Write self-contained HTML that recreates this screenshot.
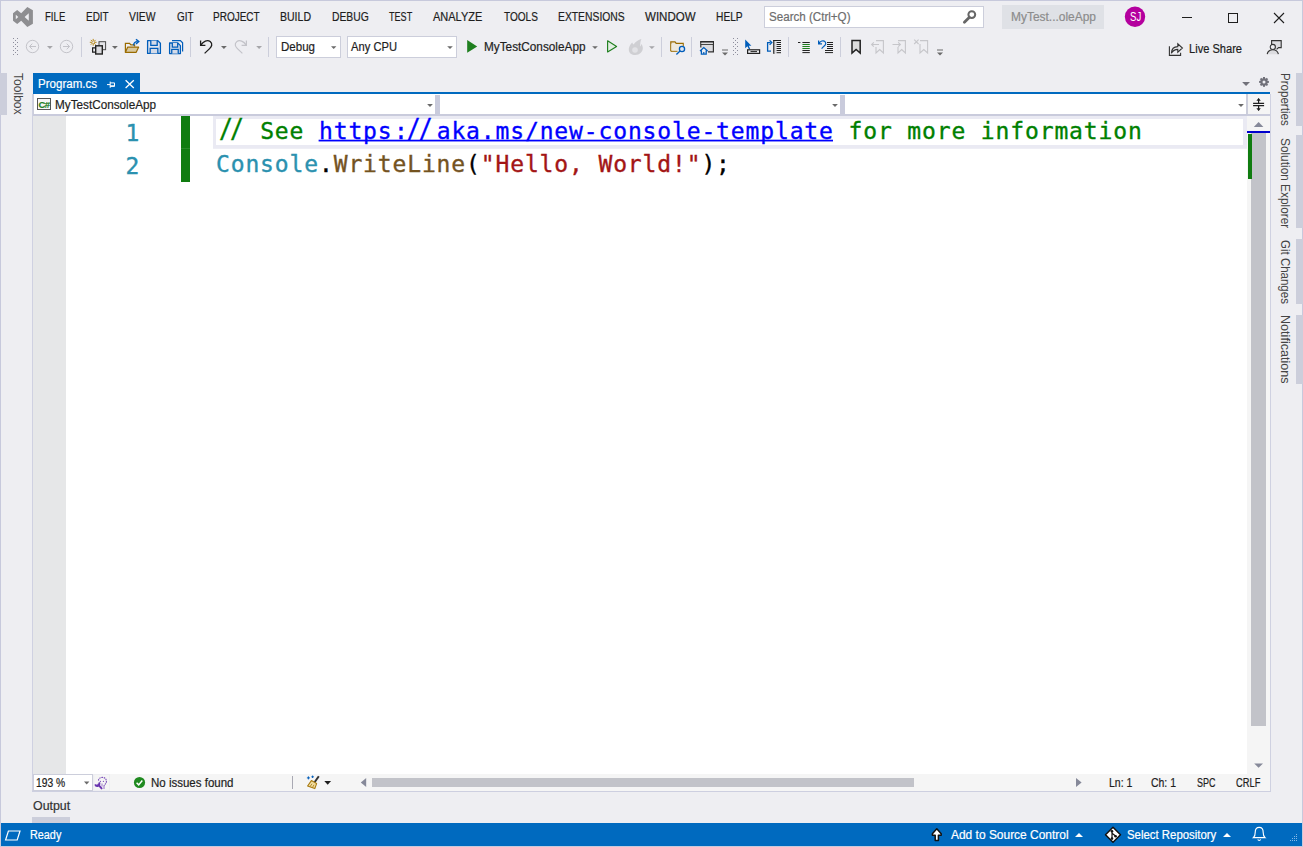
<!DOCTYPE html>
<html lang="en"><head><meta charset="utf-8"><title>MyTestConsoleApp - Program.cs</title>
<style>
html,body{margin:0;padding:0;}
body{width:1303px;height:847px;overflow:hidden;background:#eeeef2;position:relative;font-family:"Liberation Sans",sans-serif;font-size:12px;color:#1e1e1e;}
.a{position:absolute;}
.t{position:absolute;white-space:nowrap;line-height:1;transform-origin:0 0;-webkit-text-stroke:0.2px;}
.v{position:absolute;white-space:nowrap;line-height:1;transform-origin:0 0;}
svg{position:absolute;overflow:visible;}
.code{position:absolute;white-space:pre;font-family:"DejaVu Sans Mono","Liberation Mono",monospace;font-size:23px;letter-spacing:0.86px;line-height:33px;height:33px;-webkit-text-stroke:0.35px;}
</style></head><body>
<div class="a" style="left:0px;top:0px;width:1303px;height:1px;background:#c7c9dc;"></div>
<div class="a" style="left:0px;top:846px;width:1303px;height:1px;background:#c7c9dc;"></div>
<div class="a" style="left:0px;top:0px;width:1px;height:847px;background:#c7c9dc;"></div>
<div class="a" style="left:1302px;top:0px;width:1px;height:847px;background:#c7c9dc;"></div>
<div class="a" style="left:764px;top:6px;width:218px;height:20px;background:#fff;border:1px solid #cccedb;"></div>
<div class="a" style="left:1002px;top:5px;width:102px;height:24px;background:#dfe1e6;"></div>
<div class="a" style="left:276px;top:36px;width:63px;height:20px;background:#fff;border:1px solid #cccedb;"></div>
<div class="a" style="left:347px;top:36px;width:108px;height:20px;background:#fff;border:1px solid #cccedb;"></div>
<div class="a" style="left:81px;top:37px;width:1px;height:20px;background:#cccedb;"></div>
<div class="a" style="left:190px;top:37px;width:1px;height:20px;background:#cccedb;"></div>
<div class="a" style="left:268px;top:37px;width:1px;height:20px;background:#cccedb;"></div>
<div class="a" style="left:661px;top:37px;width:1px;height:20px;background:#cccedb;"></div>
<div class="a" style="left:691px;top:37px;width:1px;height:20px;background:#cccedb;"></div>
<div class="a" style="left:788px;top:37px;width:1px;height:20px;background:#cccedb;"></div>
<div class="a" style="left:840px;top:37px;width:1px;height:20px;background:#cccedb;"></div>
<svg width="1303" height="70" viewBox="0 0 1303 70" style="left:0;top:0">
<path fill="#8e8e91" fill-rule="evenodd" d="M27.3,6.9 L32.9,10.2 V23.8 L27.3,27.1 L21.2,20.7 L17.2,23.9 L13,20.8 V13.2 L17.2,10.1 L21.2,13.3 Z M15.8,14.7 L18.3,17 L15.8,19.3 Z M28.8,13.3 L24.6,17 L28.8,20.7 Z"/>
<circle cx="971.8" cy="14.6" r="3.4" fill="none" stroke="#666" stroke-width="2"/><path d="M969.2,17.4 L964.4,22.2" stroke="#666" stroke-width="2.8" stroke-linecap="round"/>
<circle cx="1135" cy="16.7" r="10.2" fill="#b4009e"/>
<path d="M1182,17.5 H1192" stroke="#1e1e1e" stroke-width="1"/>
<rect x="1228.5" y="13.5" width="9" height="9" fill="none" stroke="#1e1e1e" stroke-width="1"/>
<path d="M1274,13 L1284,23 M1284,13 L1274,23" stroke="#1e1e1e" stroke-width="1.1" fill="none"/>
<g fill="#8d8d9c"><rect x="13" y="38" width="1" height="1"/><rect x="17" y="38" width="1" height="1"/><rect x="15" y="40" width="1" height="1"/><rect x="13" y="42" width="1" height="1"/><rect x="17" y="42" width="1" height="1"/><rect x="15" y="44" width="1" height="1"/><rect x="13" y="46" width="1" height="1"/><rect x="17" y="46" width="1" height="1"/><rect x="15" y="48" width="1" height="1"/><rect x="13" y="50" width="1" height="1"/><rect x="17" y="50" width="1" height="1"/><rect x="15" y="52" width="1" height="1"/><rect x="13" y="54" width="1" height="1"/><rect x="17" y="54" width="1" height="1"/></g>
<g fill="#8d8d9c"><rect x="733" y="38" width="1" height="1"/><rect x="737" y="38" width="1" height="1"/><rect x="735" y="40" width="1" height="1"/><rect x="733" y="42" width="1" height="1"/><rect x="737" y="42" width="1" height="1"/><rect x="735" y="44" width="1" height="1"/><rect x="733" y="46" width="1" height="1"/><rect x="737" y="46" width="1" height="1"/><rect x="735" y="48" width="1" height="1"/><rect x="733" y="50" width="1" height="1"/><rect x="737" y="50" width="1" height="1"/><rect x="735" y="52" width="1" height="1"/><rect x="733" y="54" width="1" height="1"/><rect x="737" y="54" width="1" height="1"/></g>
<g fill="none" stroke="#c3c3c9" stroke-width="1"><circle cx="32.5" cy="46.5" r="6.2"/><path d="M36,46.5 H29.5 M32.3,43.7 L29.5,46.5 L32.3,49.3"/><circle cx="66.5" cy="46.5" r="6.2"/><path d="M63,46.5 H69.5 M66.7,43.7 L69.5,46.5 L66.7,49.3"/></g>
<path d="M47,46 h5.8 l-2.9,3 Z" fill="#a6a6aa"/>
<g fill="none"><rect x="99" y="41.7" width="6.6" height="8" fill="#e4e4e8" stroke="#4a4a4a" stroke-width="1"/><rect x="95.7" y="45.8" width="6.6" height="8.2" fill="#dcdce0" stroke="#222" stroke-width="1.4"/><path d="M95.5,47.8 H92.6 V52.2 H95.5" stroke="#222" stroke-width="1.2"/><path d="M93.2,38.9 V45.7 M89.8,42.3 H96.6 M90.8,39.9 L95.6,44.7 M95.6,39.9 L90.8,44.7" stroke="#b07d00" stroke-width="0.9"/><circle cx="93.2" cy="42.3" r="1" fill="#eeeef2"/></g>
<path d="M112,46 h5.8 l-2.9,3 Z" fill="#6a6a6a"/>
<g><path d="M125.4,52.3 V43.4 H129.6 L130.8,44.8 H134.6 V46.6" fill="none" stroke="#9a6b00" stroke-width="1.2"/><path d="M125.4,52.3 L127.6,47.2 H138.6 L136.2,52.3 Z" fill="#d8c8a0" stroke="#9a6b00" stroke-width="1.2" stroke-linejoin="round"/><path d="M133.6,45.6 C133.6,42.6 135.4,41.6 137.6,41.6" fill="none" stroke="#005dba" stroke-width="1.4"/><path d="M136,39.2 L138.8,41.6 L136,44" fill="none" stroke="#005dba" stroke-width="1.4"/></g>
<g><path d="M147.6,40.6 H157.8 L160.4,43.2 V53.400000000000006 H147.6 Z" fill="#e0e4ee" stroke="#005dba" stroke-width="1.3" stroke-linejoin="round"/><path d="M150.79999999999998,40.6 V45.464 H157.2 V40.6" fill="#d5dbe8" stroke="#005dba" stroke-width="1.3"/><path d="M150.16,53.400000000000006 V48.28 H157.84 V53.400000000000006" fill="#d5dbe8" stroke="#005dba" stroke-width="1.3"/></g>
<g><path d="M172,40.6 H180.4 L182.6,42.8 V51.4" fill="none" stroke="#005dba" stroke-width="1.2"/><path d="M169.6,43 H177.8 L180.4,45.6 V53.6 H169.6 Z" fill="#e0e4ee" stroke="#005dba" stroke-width="1.3" stroke-linejoin="round"/><path d="M172.29999999999998,43 V47.028 H177.7 V43" fill="#d5dbe8" stroke="#005dba" stroke-width="1.3"/><path d="M171.76,53.6 V49.36 H178.24 V53.6" fill="#d5dbe8" stroke="#005dba" stroke-width="1.3"/></g>
<path d="M200.6,40.6 V45.4 H205.4 M201,45 C203,41.4 207.4,39.4 210.2,41.6 C213,44 211.6,46.6 209.6,48.6 L204.6,53.4" fill="none" stroke="#1e1e1e" stroke-width="1.3"/>
<path d="M221,46 h5.8 l-2.9,3 Z" fill="#6a6a6a"/>
<path d="M246.4,40.6 V45.4 H241.6 M246,45 C244,41.4 239.6,39.4 236.8,41.6 C234,44 235.4,46.6 237.4,48.6 L242.4,53.4" fill="none" stroke="#c3c3c9" stroke-width="1.2"/>
<path d="M256.2,46 h5.8 l-2.9,3 Z" fill="#a6a6aa"/>
<path d="M331,46.2 h5.4 l-2.7,2.8 Z" fill="#6a6a6a"/>
<path d="M447.2,46.2 h5.6 l-2.8,2.8 Z" fill="#6a6a6a"/>
<path d="M467.2,40 L477.2,46.4 L467.2,52.8 Z" fill="#1f7f1f"/>
<path d="M592.2,46.2 h5.6 l-2.8,2.8 Z" fill="#6a6a6a"/>
<path d="M607.6,40.8 L616.6,46.4 L607.6,52 Z" fill="#e2eee2" stroke="#1f7f1f" stroke-width="1.15" stroke-linejoin="round"/>
<path d="M641.4,39 C638.5,39.8 635.5,41.6 633.6,44.4 C632.8,43.8 632.4,43.2 632.2,42.6 C629.8,45 628.6,47.6 628.8,50 C629,53 631.6,55 635.4,55 C639.6,55 642.6,52.2 642.8,48.6 C642.9,46.6 642.2,45 641.4,44 C641.2,45.2 640.8,46 640,46.6 C640.4,44 640.2,41.4 641.4,39 Z" fill="#cfcfd3"/>
<circle cx="635" cy="50" r="2.8" fill="#e2e2e6"/>
<path d="M649,46.2 h5.8 l-2.9,2.8 Z" fill="#a6a6aa"/>
<g><path d="M670.8,51.2 V41.8 H675 L676.2,43.4 H683.2 V46" fill="#eee9de" stroke="#9a6b00" stroke-width="1.2"/><path d="M670.8,51.2 H677.5" stroke="#9a6b00" stroke-width="1.2"/><rect x="671.4" y="44" width="11" height="6.6" fill="#eee9de"/><circle cx="682" cy="49" r="2.6" fill="#dfe6f2" stroke="#005dba" stroke-width="1.3"/><path d="M680,51 L676.4,54.4" stroke="#005dba" stroke-width="1.4"/></g>
<g><path d="M708,51.9 H713.4 V41.8 H700.8 V47.4" fill="#dcdce0" stroke="#333" stroke-width="1.2"/><rect x="701.4" y="42.4" width="11.4" height="1.5" fill="#f6f6f8"/><path d="M700.2,41.8 H714" stroke="#222" stroke-width="1.3"/><path d="M700.8,44.4 H713.4" stroke="#333" stroke-width="1"/><path d="M700,51 L703.8,47.6 L707.6,51 M701.4,50.4 V54.2 H706.2 V50.4" fill="#eeeef2" stroke="#005dba" stroke-width="1.3"/><rect x="703.2" y="52" width="1.2" height="2" fill="#005dba"/></g>
<rect x="722" y="49.5" width="6" height="1" fill="#6a6a6a"/><path d="M722,52.6 h6 l-3,3 Z" fill="#6a6a6a"/>
<g><path d="M745.2,39.4 V48.2 L747.4,46.2 L749,49.6 L750.2,49 L748.8,45.8 H751.4 Z" fill="#005dba"/><rect x="747.6" y="49.8" width="12" height="3.6" fill="#eeeef2" stroke="#222" stroke-width="1.2"/><path d="M750.5,51.6 H757" stroke="#222" stroke-width="1"/></g>
<g><path d="M771,51.2 H767.6 V42.6 H770.6" fill="none" stroke="#005dba" stroke-width="1.3"/><path d="M769.6,40.4 L771.8,42.6 L769.6,44.8" fill="none" stroke="#005dba" stroke-width="1.3"/><rect x="773.2" y="40" width="1.4" height="13.8" fill="#222"/><rect x="774.6" y="41" width="2" height="12.5" fill="#dcdce0"/><path d="M773.2,40.5 H781 M776.6,42.5 H781 M776.6,44.5 H781 M776.6,46.5 H781 M776.6,48.5 H781 M776.6,50.5 H781 M776.6,52.7 H781" stroke="#222" stroke-width="1"/></g>
<g stroke-width="1"><path d="M798,42.5 H800.4 M802.4,42.5 H809.8 M802.4,50.5 H809.8 M802.4,52.6 H809.8" stroke="#222"/><path d="M802.4,44.5 H809.8 M802.4,46.5 H809.8 M802.4,48.5 H809.8" stroke="#1f7f1f"/></g>
<g fill="none"><path d="M818.6,40.4 V43.8 H822 M819,43.4 C820.2,41 823.4,40 825,41.6 C826.6,43.4 825.4,45 824,46.2 L821.6,48.6" stroke="#005dba" stroke-width="1.2"/><path d="M827,42.5 H833 M827,44.5 H833 M827,46.5 H833 M827,48.5 H833 M825,50.5 H833 M825,52.6 H833" stroke="#222" stroke-width="1"/></g>
<path d="M852,40.6 H860.2 V53 L856.1,49.4 L852,53 Z" fill="#dcdcdc" stroke="#222" stroke-width="1.5" stroke-linejoin="miter"/>
<g fill="none" stroke="#c6c6ca" stroke-width="1.1"><path d="M876,40.6 H883.4 V53 L879.7,49.6 L876,53 V47"/><path d="M879,44.5 H871.6 M873.8,42.3 L871.6,44.5 L873.8,46.7"/><path d="M898,40.6 H905.4 V53 L901.7,49.6 L898,53 V47"/><path d="M892.5,44.5 H900.4 M898.2,42.3 L900.4,44.5 L898.2,46.7"/><path d="M920,40.6 H927.6 V53 L923.8,49.6 L920,53 V44"/><path d="M914.2,39.6 L918.6,44 M918.6,39.6 L914.2,44"/></g>
<rect x="937" y="49.5" width="6" height="1" fill="#6a6a6a"/><path d="M937,52.6 h6 l-3,3 Z" fill="#6a6a6a"/>
<g fill="none" stroke="#333" stroke-width="1.1"><path d="M1169.4,46.2 V55.4 H1180.6 V52.8"/><path d="M1171.4,53.2 C1171.6,48.8 1174.2,46.6 1177.8,46.6 V43.8 L1182.4,48 L1177.8,52.2 V49.4 C1175,49.4 1173,50.4 1171.4,53.2 Z" fill="#eeeef2"/></g>
<g fill="none" stroke="#333" stroke-width="1.1"><path d="M1271.6,44.6 V40.6 H1281.2 V47.6 H1278.6 L1276.6,49.4" fill="#dcdce0"/><circle cx="1272.8" cy="47" r="2.6" fill="#eeeef2"/><path d="M1267.2,54.2 C1267.8,50.6 1270.4,49.8 1272.8,49.8 C1275.2,49.8 1277.6,50.6 1278.4,54.2" fill="#dcdce0"/></g>
</svg>
<div class="a" style="left:0px;top:73px;width:7px;height:42px;background:#cccedb;"></div>
<div class="a" style="left:1296px;top:73px;width:7px;height:53px;background:#cccedb;"></div>
<div class="a" style="left:1296px;top:135px;width:7px;height:93px;background:#cccedb;"></div>
<div class="a" style="left:1296px;top:239px;width:7px;height:65px;background:#cccedb;"></div>
<div class="a" style="left:1296px;top:315px;width:7px;height:69px;background:#cccedb;"></div>
<div class="a" style="left:33px;top:73px;width:107px;height:19px;background:#006abf;"></div>
<div class="a" style="left:33px;top:92px;width:1237px;height:2px;background:#006abf;"></div>
<div class="a" style="left:32px;top:94px;width:1px;height:698px;background:#cfd1e1;"></div>
<div class="a" style="left:1270px;top:94px;width:1px;height:698px;background:#cfd1e1;"></div>
<div class="a" style="left:33px;top:94px;width:1237px;height:20px;background:#ffffff;"></div>
<div class="a" style="left:33px;top:94px;width:1px;height:20px;background:#cccedb;"></div>
<div class="a" style="left:435px;top:95px;width:5px;height:19px;background:#c9cbdc;"></div>
<div class="a" style="left:840px;top:95px;width:5px;height:19px;background:#c9cbdc;"></div>
<div class="a" style="left:1246px;top:94px;width:2px;height:20px;background:#cccedb;"></div>
<div class="a" style="left:1248px;top:94px;width:22px;height:20px;background:#f5f5f5;"></div>
<div class="a" style="left:33px;top:114px;width:1237px;height:2px;background:#c9cbdc;"></div>
<div class="a" style="left:37px;top:98px;width:12px;height:10px;background:#f6f6f6;border:1px solid #555;"></div>
<span class="t" style="left:38.5px;top:99.6px;font-size:9.5px;font-weight:bold;color:#1f7f1f;letter-spacing:-0.5px;">C#</span>
<div class="a" style="left:33px;top:116px;width:1214px;height:658px;background:#ffffff;"></div>
<div class="a" style="left:33px;top:116px;width:33px;height:658px;background:#e6e7e8;"></div>
<div class="a" style="left:181px;top:116px;width:9px;height:65.5px;background:#107c10;"></div>
<div class="a" style="left:181px;top:148px;width:9px;height:1px;background:#2a8a2a;"></div>
<div class="a" style="left:213px;top:116px;width:1034px;height:32px;background:#eaeaf3;"></div>
<div class="a" style="left:213px;top:148px;width:1034px;height:1px;background:#eeeef5;"></div>
<div class="a" style="left:216px;top:119px;width:1027px;height:26px;background:#ffffff;"></div>
<div class="code" id="ln1" style="left:125.6px;top:116.5px;color:#2b91af">1</div>
<div class="code" id="ln2" style="left:125.6px;top:149.5px;color:#2b91af">2</div>
<div class="code" id="c1" style="left:216px;top:114.5px;"><span style="color:#008000"><span style="display:inline-block;transform:translateX(3px) scaleY(1.13);transform-origin:50% 90%">/</span><span style="display:inline-block;transform:translateX(-0.8px) scaleY(1.13);transform-origin:50% 90%">/</span> See </span><span style="color:#0000ff;text-decoration:none">https<span style="display:inline-block;transform:translateX(1.5px)">:</span><span style="display:inline-block;transform:translateX(-0.6px) scaleY(1.13);transform-origin:50% 90%">/</span><span style="display:inline-block;transform:translateX(-3.2px) scaleY(1.13);transform-origin:50% 90%">/</span>aka.ms/new-console-template</span><span style="color:#008000"> for more information</span></div>
<div class="code" id="c2" style="left:216px;top:147.5px;"><span style="color:#2b91af">Console</span><span style="color:#000">.</span><span style="color:#74531f">WriteLine</span><span style="color:#000">(</span><span style="color:#a31515">"Hello, World!"</span><span style="color:#000">);</span></div>
<div class="a" style="left:1247px;top:116px;width:23px;height:658px;background:#f5f5f5;"></div>
<div class="a" style="left:1251px;top:133px;width:15px;height:593px;background:#c2c3c9;"></div>
<div class="a" style="left:1247px;top:131px;width:23px;height:2px;background:#0000cd;"></div>
<div class="a" style="left:1248px;top:134px;width:4px;height:45px;background:#107c10;"></div>
<svg width="1303" height="847" viewBox="0 0 1303 847" style="left:0;top:0">
<rect x="318.6" y="139.7" width="514.4" height="1.75" fill="#0000ff"/>
<g fill="none" stroke="#fff" stroke-width="1"><path d="M107,84.6 H110.2 M110.2,81.6 V87.8 M110.2,82.9 H114.5 V86.4 H110.2 M110.2,85.8 H114.5"/></g>
<path d="M125.6,80.2 L133.8,88 M133.8,80.2 L125.6,88" stroke="#fff" stroke-width="1.3"/>
<path d="M1242.1,81.9 h7.9 l-3.95,4.2 Z" fill="#71717a"/>
<g fill="#71717a"><rect x="1263.0" y="77.0" width="2.0" height="9.8" transform="rotate(0 1264 81.9)"/><rect x="1263.0" y="77.0" width="2.0" height="9.8" transform="rotate(45 1264 81.9)"/><rect x="1263.0" y="77.0" width="2.0" height="9.8" transform="rotate(90 1264 81.9)"/><rect x="1263.0" y="77.0" width="2.0" height="9.8" transform="rotate(135 1264 81.9)"/></g><circle cx="1264" cy="81.9" r="2.6" fill="#eeeef2" stroke="#71717a" stroke-width="2.2"/>
<path d="M427.1,103.9 h5.8 l-2.9,3.1 Z" fill="#6a6a6a"/>
<path d="M832.1,103.9 h5.8 l-2.9,3.1 Z" fill="#6a6a6a"/>
<path d="M1238.1,103.9 h5.8 l-2.9,3.1 Z" fill="#6a6a6a"/>
<g stroke="#1e1e1e" stroke-width="1.2" fill="none"><path d="M1253.1,103.3 H1264.1 M1253.1,105.7 H1264.1 M1258.6,98.8 V103 M1258.6,106 V110.2"/></g><path d="M1256.4,100.7 L1258.6,98 L1260.8,100.7 Z M1256.4,108.3 L1258.6,111 L1260.8,108.3 Z" fill="#1e1e1e"/>
<path d="M1253.8,127 L1258.6,122 L1263.4,127 Z" fill="#868999"/>
<path d="M1254.2,763.4 H1263 L1258.6,767.8 Z" fill="#868999"/>
</svg>
<div class="a" style="left:33px;top:774px;width:1237px;height:17px;background:#f5f5f5;"></div>
<div class="a" style="left:33px;top:774px;width:77px;height:17px;background:#eeeef2;"></div>
<div class="a" style="left:32px;top:791px;width:1239px;height:1px;background:#cdcfe0;"></div>
<div class="a" style="left:33px;top:774px;width:58px;height:15px;background:#fff;border:1px solid #cccedb;"></div>
<div class="a" style="left:292px;top:776px;width:1px;height:13px;background:#a9a9b3;"></div>
<div class="a" style="left:372px;top:778px;width:542px;height:9px;background:#c2c3c9;"></div>
<div class="a" style="left:32px;top:817px;width:38px;height:6px;background:#cccedb;"></div>
<div class="a" style="left:1px;top:823px;width:1301px;height:23px;background:#006abf;"></div>
<svg width="1303" height="847" viewBox="0 0 1303 847" style="left:0;top:0">
<path d="M84,781.6 h5.4 l-2.7,2.8 Z" fill="#6a6a6a"/>
<rect x="94.3" y="775" width="14.6" height="14.7" fill="#f5f5f5"/><g fill="none" stroke="#6a35b0"><path d="M98.6,780.6 C98.2,778.4 100.4,777.4 102.4,777.4 C105,777.4 106.6,779.4 106.4,781.6 C106.2,783.6 104.6,784.6 104,786 V788.8" stroke-width="1.1" stroke-dasharray="1.6 0.7" opacity="0.85"/><path d="M100.4,781.4 H100.5 M103.4,781.4 H103.5" stroke-width="1.2" stroke-linecap="round" opacity="0.8"/><path d="M102,783.4 V786.6" stroke-width="1.4" opacity="0.45"/><path d="M98.2,784.6 L101.6,788.4" stroke-width="1.9" stroke-linecap="round"/><path d="M99.2,782.4 C99.8,784 99.2,785.6 97.6,786 C96.6,786.2 95.6,785.6 95.2,784.4" stroke-width="1.9"/></g>
<circle cx="139.5" cy="782.5" r="5.6" fill="#1f8a1f"/><path d="M136.6,782.8 L138.7,784.9 L142.3,780.6" fill="none" stroke="#fff" stroke-width="1.5"/>
<g><path d="M318.8,776.2 L314.6,782.2" stroke="#333" stroke-width="2"/><path d="M311.4,780.6 L316.6,783.6 L314.8,788.6 L307.6,786 Z" fill="#f0dca0" stroke="#a87a10" stroke-width="1.1" stroke-linejoin="round"/><path d="M310,786.6 L312,783.8 M312.4,787.6 L314,784.8" stroke="#a87a10" stroke-width="0.8"/><path d="M308.4,776.4 v3 M306.9,777.9 h3 M312.6,775.6 v2.4 M311.4,776.8 h2.4" stroke="#005dba" stroke-width="1"/></g>
<path d="M324.3,781 h6.8 l-3.4,3.8 Z" fill="#1e1e1e"/>
<path d="M366.2,778 V787 L360.8,782.5 Z" fill="#868999"/>
<path d="M1076,778 V787 L1081.6,782.5 Z" fill="#868999"/>
<path d="M8.4,831 H20 L17.2,840 H5.6 Z" fill="none" stroke="#fff" stroke-width="1.2"/>
<path d="M936.8,828.8 L932.4,833.8 V835.2 H935.2 V840.4 H938.4 V835.2 H941.2 V833.8 Z" fill="#fff" stroke="#111" stroke-width="1.5" stroke-linejoin="round"/>
<path d="M1075,837 h8 l-4,-4 Z" fill="#fff"/>
<path d="M1223,837 h8 l-4,-4 Z" fill="#fff"/>
<g><path d="M1113,827.2 L1120.5,834.7 L1113,842.2 L1105.5,834.7 Z" fill="#fff" stroke="#111" stroke-width="1.5" stroke-linejoin="round"/><path d="M1112,831.2 V838.6 M1112,833.2 L1115.6,836" stroke="#111" stroke-width="1.2" fill="none"/><circle cx="1112" cy="831.2" r="1.3" fill="#111"/><circle cx="1112" cy="838.6" r="1.3" fill="#111"/><circle cx="1115.6" cy="836.2" r="1.3" fill="#111"/></g>
<path d="M1253.4,837.6 H1265 C1263.6,836.4 1263.2,834.6 1263.2,832.4 C1263.2,829.4 1261.6,827.4 1259.2,827.4 C1256.8,827.4 1255.2,829.4 1255.2,832.4 C1255.2,834.6 1254.8,836.4 1253.4,837.6 Z M1257.8,839.4 C1258.2,840.8 1260.2,840.8 1260.6,839.4" fill="none" stroke="#fff" stroke-width="1.15"/>
<g fill="#86b8e6"><rect x="1296" y="834" width="1" height="1"/><rect x="1296" y="836" width="1" height="1"/><rect x="1294" y="836" width="1" height="1"/><rect x="1296" y="838" width="1" height="1"/><rect x="1294" y="838" width="1" height="1"/><rect x="1292" y="838" width="1" height="1"/><rect x="1296" y="840" width="1" height="1"/><rect x="1294" y="840" width="1" height="1"/><rect x="1292" y="840" width="1" height="1"/><rect x="1290" y="840" width="1" height="1"/></g>
</svg>
<span id="t0" class="t" style="left:45.3px;top:10.53px;font-size:12px;color:#1e1e1e;transform:scaleX(0.8010);">FILE</span>
<span id="t1" class="t" style="left:86.3px;top:10.53px;font-size:12px;color:#1e1e1e;transform:scaleX(0.8302);">EDIT</span>
<span id="t2" class="t" style="left:129px;top:10.53px;font-size:12px;color:#1e1e1e;transform:scaleX(0.8640);">VIEW</span>
<span id="t3" class="t" style="left:176.5px;top:10.53px;font-size:12px;color:#1e1e1e;transform:scaleX(0.8250);">GIT</span>
<span id="t4" class="t" style="left:213.3px;top:10.53px;font-size:12px;color:#1e1e1e;transform:scaleX(0.8337);">PROJECT</span>
<span id="t5" class="t" style="left:280.3px;top:10.53px;font-size:12px;color:#1e1e1e;transform:scaleX(0.8771);">BUILD</span>
<span id="t6" class="t" style="left:332px;top:10.53px;font-size:12px;color:#1e1e1e;transform:scaleX(0.8621);">DEBUG</span>
<span id="t7" class="t" style="left:389.3px;top:10.53px;font-size:12px;color:#1e1e1e;transform:scaleX(0.7564);">TEST</span>
<span id="t8" class="t" style="left:433px;top:10.53px;font-size:12px;color:#1e1e1e;transform:scaleX(0.9164);">ANALYZE</span>
<span id="t9" class="t" style="left:503.7px;top:10.53px;font-size:12px;color:#1e1e1e;transform:scaleX(0.8377);">TOOLS</span>
<span id="t10" class="t" style="left:558.3px;top:10.53px;font-size:12px;color:#1e1e1e;transform:scaleX(0.8622);">EXTENSIONS</span>
<span id="t11" class="t" style="left:645px;top:10.53px;font-size:12px;color:#1e1e1e;transform:scaleX(0.9609);">WINDOW</span>
<span id="t12" class="t" style="left:716.3px;top:10.53px;font-size:12px;color:#1e1e1e;transform:scaleX(0.8514);">HELP</span>
<span id="t13" class="t" style="left:769px;top:10.53px;font-size:12px;color:#6d6d6d;transform:scaleX(0.9661);">Search (Ctrl+Q)</span>
<span id="t14" class="t" style="left:1010.5px;top:11.03px;font-size:12px;color:#8c8c8c;transform:scaleX(0.9956);">MyTest...oleApp</span>
<span id="t15" class="t" style="left:1129.6px;top:11.03px;font-size:12px;color:#ffffff;transform:scaleX(0.7991);-webkit-text-stroke:0;">SJ</span>
<span id="t16" class="t" style="left:280.5px;top:41.03px;font-size:12px;color:#1e1e1e;transform:scaleX(0.9611);">Debug</span>
<span id="t17" class="t" style="left:351px;top:41.03px;font-size:12px;color:#1e1e1e;transform:scaleX(0.9319);">Any CPU</span>
<span id="t18" class="t" style="left:484.3px;top:41.03px;font-size:12px;color:#1e1e1e;transform:scaleX(0.9817);">MyTestConsoleApp</span>
<span id="t19" class="t" style="left:1189px;top:43.03px;font-size:12px;color:#1e1e1e;transform:scaleX(0.9237);">Live Share</span>
<span id="t20" class="t" style="left:37.5px;top:77.73px;font-size:12px;color:#ffffff;transform:scaleX(0.9632);">Program.cs</span>
<span id="t21" class="t" style="left:54.6px;top:98.53px;font-size:12px;color:#1e1e1e;transform:scaleX(0.9778);">MyTestConsoleApp</span>
<span id="t22" class="t" style="left:35.7px;top:776.73px;font-size:12px;color:#1e1e1e;transform:scaleX(0.8580);">193 %</span>
<span id="t23" class="t" style="left:150.5px;top:776.53px;font-size:12px;color:#1e1e1e;transform:scaleX(0.9586);">No issues found</span>
<span id="t24" class="t" style="left:1109.2px;top:776.53px;font-size:12px;color:#1e1e1e;transform:scaleX(0.8763);">Ln: 1</span>
<span id="t25" class="t" style="left:1151.4px;top:776.53px;font-size:12px;color:#1e1e1e;transform:scaleX(0.8715);">Ch: 1</span>
<span id="t26" class="t" style="left:1196.5px;top:776.53px;font-size:12px;color:#1e1e1e;transform:scaleX(0.7494);">SPC</span>
<span id="t27" class="t" style="left:1235.5px;top:776.53px;font-size:12px;color:#1e1e1e;transform:scaleX(0.7785);">CRLF</span>
<span id="t28" class="t" style="left:32.7px;top:800.23px;font-size:12px;color:#333333;transform:scaleX(1.0324);">Output</span>
<span id="t29" class="t" style="left:29.5px;top:829.03px;font-size:12px;color:#ffffff;transform:scaleX(0.9023);">Ready</span>
<span id="t30" class="t" style="left:951.4px;top:829.03px;font-size:12px;color:#ffffff;transform:scaleX(0.9960);">Add to Source Control</span>
<span id="t31" class="t" style="left:1127.4px;top:829.03px;font-size:12px;color:#ffffff;transform:scaleX(0.9495);">Select Repository</span>
<span id="v0" class="v" style="left:23.77px;top:73.0px;font-size:12px;color:#444444;transform:rotate(90deg) scaleX(1.0054);">Toolbox</span>
<span id="v1" class="v" style="left:1290.67px;top:73.0px;font-size:12px;color:#444444;transform:rotate(90deg) scaleX(0.9634);">Properties</span>
<span id="v2" class="v" style="left:1290.67px;top:137.6px;font-size:12px;color:#444444;transform:rotate(90deg) scaleX(0.9870);">Solution Explorer</span>
<span id="v3" class="v" style="left:1290.67px;top:239.8px;font-size:12px;color:#444444;transform:rotate(90deg) scaleX(0.9580);">Git Changes</span>
<span id="v4" class="v" style="left:1290.67px;top:315.4px;font-size:12px;color:#444444;transform:rotate(90deg) scaleX(1.0493);">Notifications</span>
</body></html>
